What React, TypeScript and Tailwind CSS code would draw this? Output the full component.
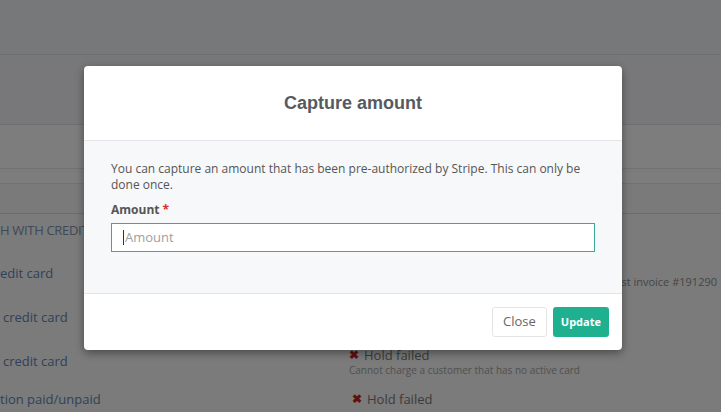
import React from 'react';

const App: React.FC = () => {
  return (
    <div className="relative w-full h-[412px] overflow-hidden bg-[#f6f6f6] font-['Open_Sans',sans-serif]">
      {/* page behind the dialog */}
      <div className="h-[55px] bg-[#eef0f4] border-b border-[#dcdde0]" />
      <div className="h-[70px] bg-[#f0f1f4] border-b border-[#dedede]" />
      <div className="h-[44px] bg-[#fafafa] border-b border-[#e4e4e4]" />
      <div className="h-[4px] bg-[#f6f6f6]" />
      <div className="h-[11px] bg-[#fbfbfb] border-b border-[#e2e2e2]" />
      <div className="h-[30px] bg-[#f4f4f4] border-b border-[#d8d8d8]" />
      <div className="h-[38px] pt-[8px] text-[13px] leading-[16px] text-[#7b93ad] uppercase tracking-tight">
        H with credit card
      </div>
      <div className="flex flex-col">
        <div className="h-[44px] flex items-center justify-between text-[13px] text-[#5f84b4]">
          <span>edit card</span>
          <span className="shrink-0 mt-[16px] mr-[4px] text-[11px] text-[#8c8c8c] whitespace-nowrap">Guest invoice #191290</span>
        </div>
        <div className="h-[44px] flex items-center text-[13px] text-[#5f84b4]">
          <span className="pl-[3px]">credit card</span>
        </div>
        <div className="h-[44px] flex items-center text-[13px] text-[#5f84b4]">
          <span className="pl-[3px] w-[349px]">credit card</span>
          <div className="flex flex-col">
            <span className="flex items-center gap-[5px] text-[13px] text-[#777] leading-[16px]">
              <span className="text-[#c41f1f] text-[12px] font-bold">✖</span>Hold failed
            </span>
            <span className="text-[10px] text-[#a2a2a2] leading-[14px]">Cannot charge a customer that has no active card</span>
          </div>
        </div>
        <div className="h-[28px] pt-[7px] flex items-start text-[13px] leading-[16px] text-[#5f84b4]">
          <span className="w-[352px]">tion paid/unpaid</span>
          <span className="flex items-center gap-[5px] text-[13px] text-[#777]">
            <span className="text-[#c41f1f] text-[12px] font-bold">✖</span>Hold failed
          </span>
        </div>
      </div>

      {/* overlay + dialog */}
      <div className="absolute inset-0 bg-black/50">
        <div className="mt-[66px] ml-[84px] w-[538px] rounded-[4px] bg-white shadow-[0_3px_9px_rgba(0,0,0,0.4)] overflow-hidden">
          <div className="h-[75px] flex items-center justify-center border-b border-[#e3e5e8]">
            <h3 className="font-['Liberation_Sans',Arial,sans-serif] font-bold text-[18px] text-[#555a60]">Capture amount</h3>
          </div>
          <div className="bg-[#f7f8fa] px-[27px] pt-[20px] pb-[41px] border-b border-[#e3e5e8]">
            <p className="text-[12px] leading-[16px] text-[#555]">
              You can capture an amount that has been pre-authorized by Stripe. This can only be done once.
            </p>
            <label className="block mt-[9px] text-[12px] font-bold text-[#555] leading-[16px]">
              Amount <span className="text-[#d0312d]">*</span>
            </label>
            <div className="mt-[5px] h-[29px] bg-white border border-[#3aa89c] flex items-center pl-[11px] text-[13px] text-[#a0a0a0]">
              <span className="w-px h-[15px] bg-[#333] mr-[1px]" />
              Amount
            </div>
          </div>
          <div className="h-[56px] flex items-center justify-end gap-[6px] pr-[13px]">
            <button className="h-[30px] px-[10px] bg-white border border-[#e4e4e4] rounded-[3px] text-[13px] text-[#666]">Close</button>
            <button className="h-[30px] px-[8px] bg-[#1fb08f] rounded-[3px] text-[11px] font-bold text-white">Update</button>
          </div>
        </div>
      </div>
    </div>
  );
};

export default App;
